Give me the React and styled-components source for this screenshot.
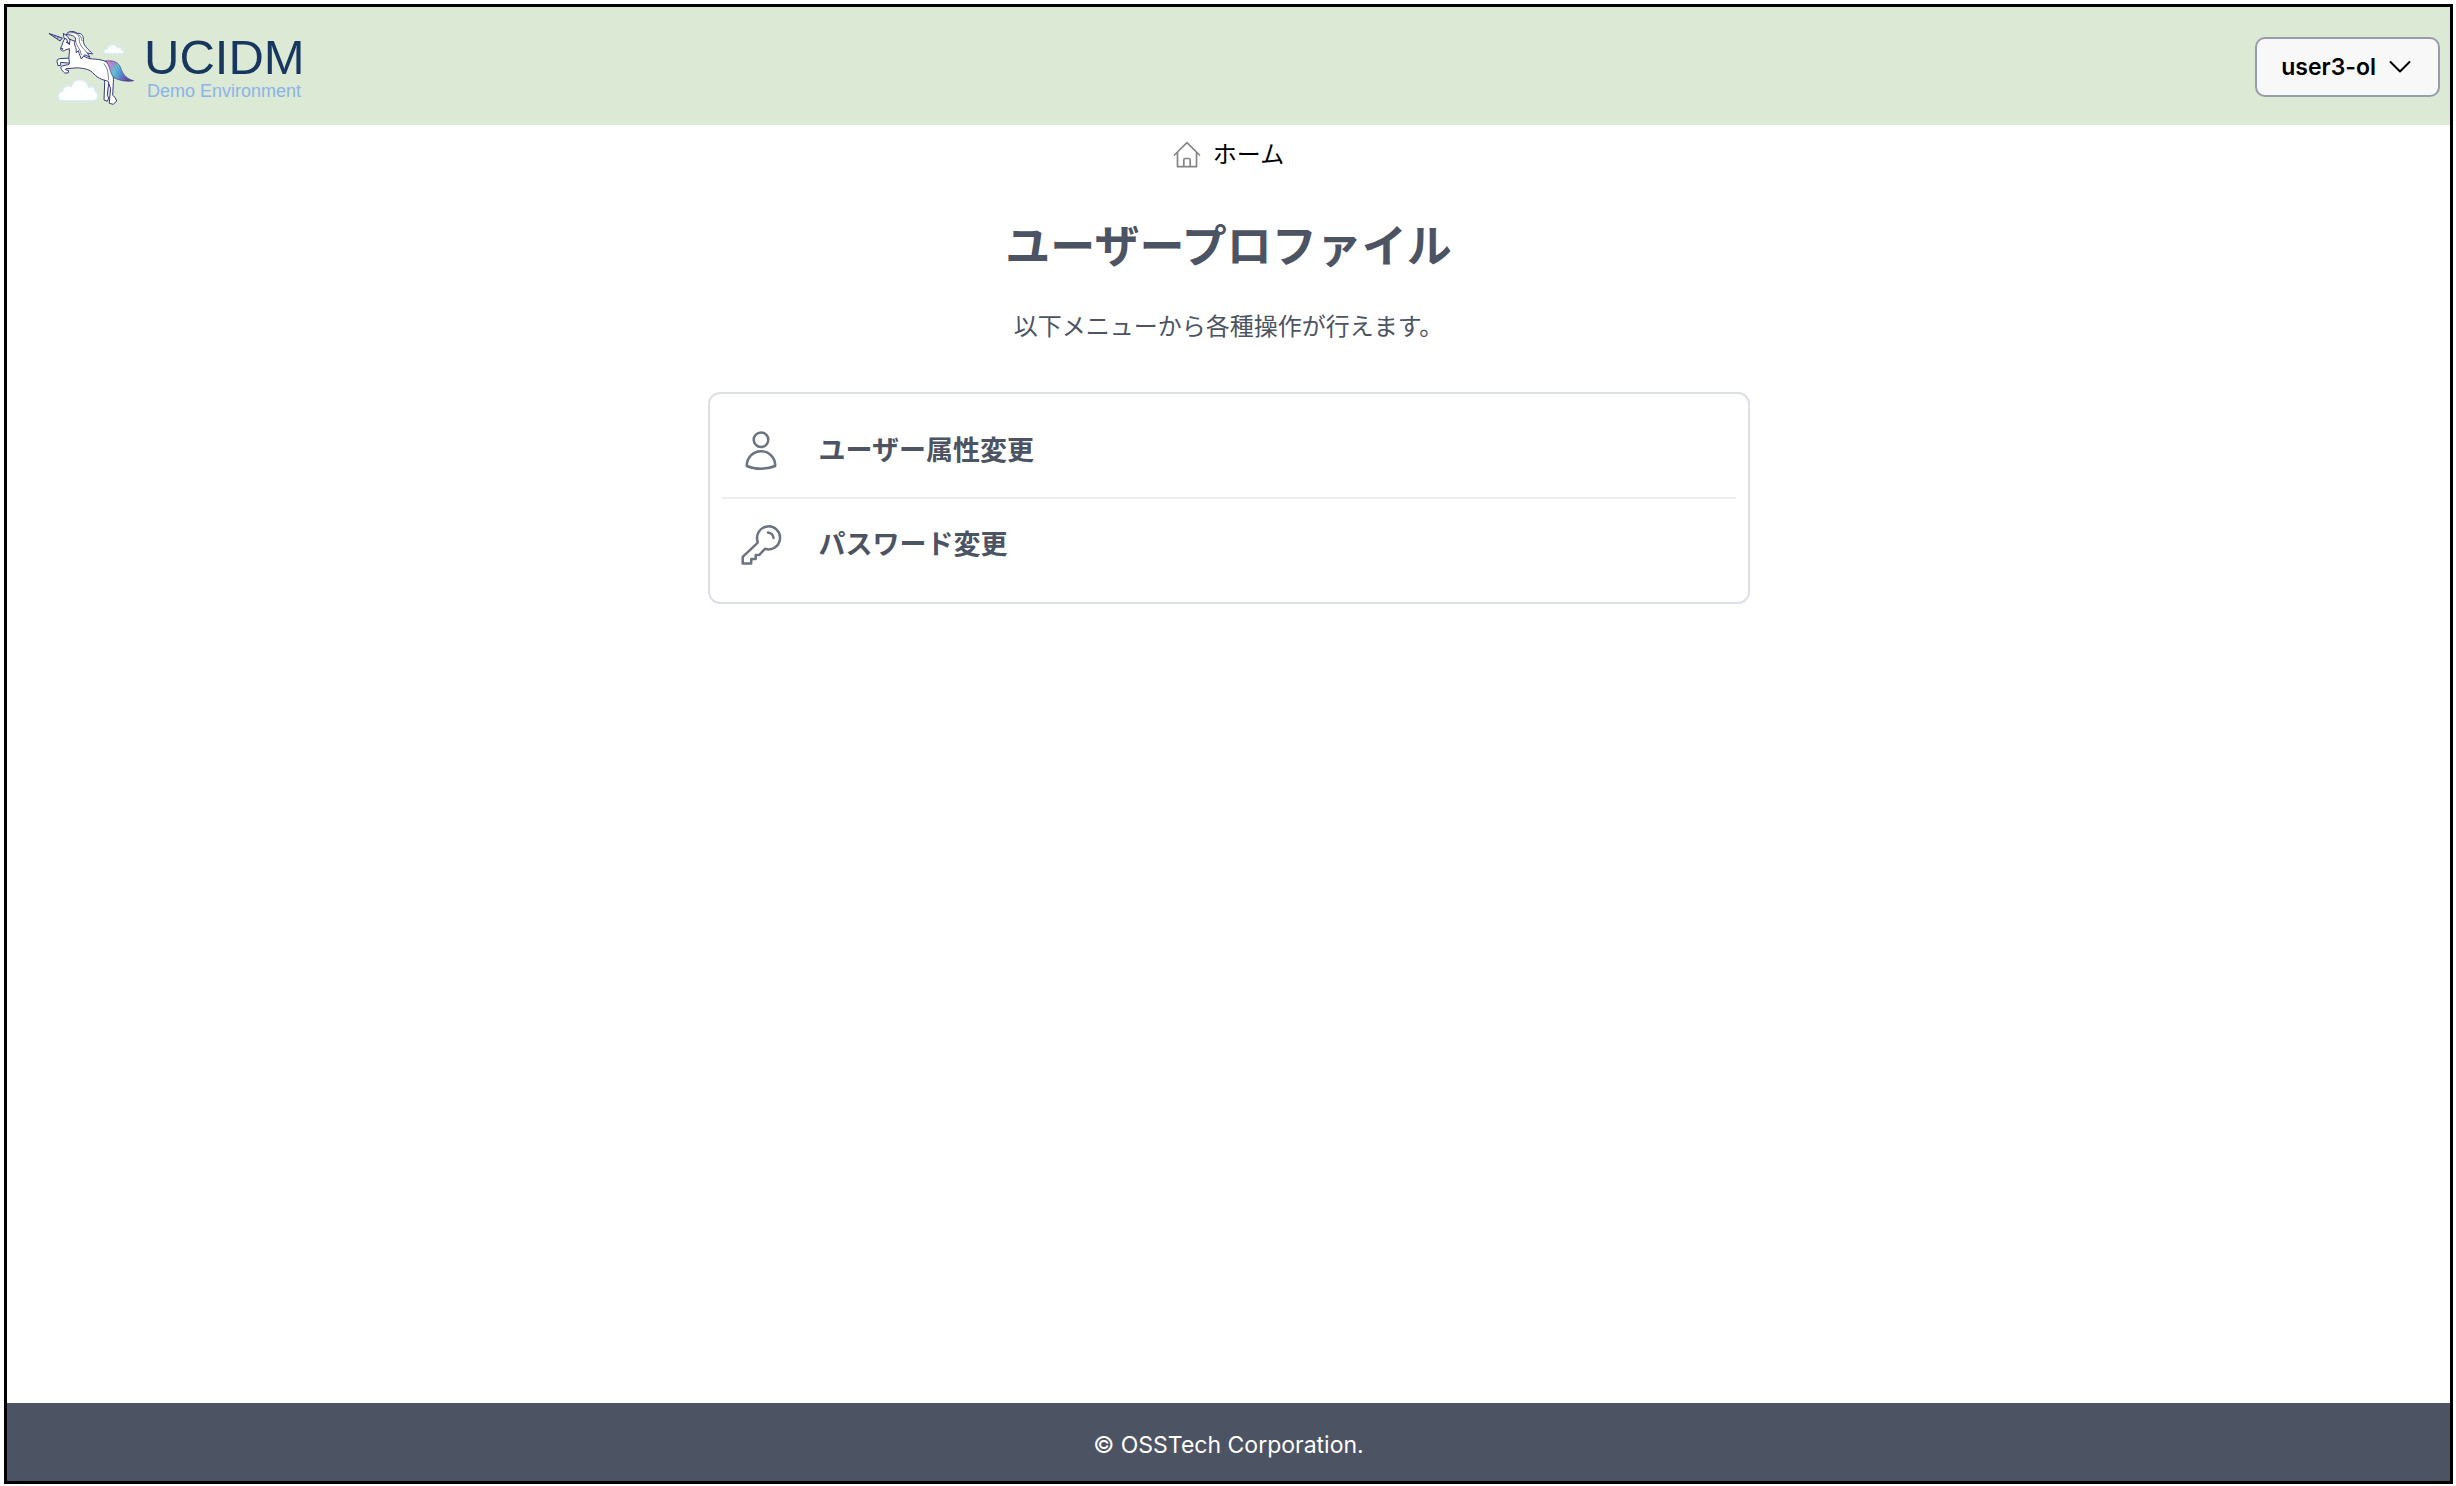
import React from 'react';
import styled, { createGlobalStyle } from 'styled-components';

const GlobalStyle = createGlobalStyle`
    * {
        box-sizing: border-box;
    }
    body {
        margin: 0;
        background: #fff;
        color: #000;
        font-family: Inter, "Noto Sans CJK JP", sans-serif;
        font-size: 24px;
        line-height: 36px;
    }
    a {
        color: inherit;
        text-decoration: none;
    }
`

const Page = styled.div`
    display: flex;
    min-height: 100vh;
    padding: 4px 3px 2px 4px;
`

const Frame = styled.div`
    flex: 1;
    display: flex;
    flex-direction: column;
    border: 3px solid #000;
`

const Header = styled.header`
    display: flex;
    align-items: center;
    justify-content: space-between;
    height: 118px;
    padding: 2px 10px 0 33px;
    background: #dce9d5;
`

const Brand = styled.a`
    display: flex;
    align-items: center;
`

const BrandText = styled.span`
    display: flex;
    flex-direction: column;
    margin-left: -6px;
    font-family: "Liberation Sans", Arial, sans-serif;
`

const BrandName = styled.span`
    color: #17375e;
    font-size: 49px;
    line-height: 48px;
`

const BrandNote = styled.span`
    padding-left: 3px;
    color: #8db3e6;
    font-size: 18px;
    line-height: 20px;
`

const UserButton = styled.button`
    display: flex;
    align-items: center;
    gap: 12px;
    height: 60px;
    padding: 0 26px 0 24px;
    border: 2px solid #969caa;
    border-radius: 10px;
    background: #f8f8f8;
    color: #000;
    font-family: inherit;
    font-size: 23px;
    font-weight: 600;
`

const Main = styled.main`
    flex: 1;
    display: flex;
    flex-direction: column;
    align-items: center;
    padding: 12px 16px;
`

const HomeLink = styled.a`
    display: flex;
    align-items: center;
    gap: 12px;
`

const Title = styled.h1`
    margin: 42px 0 30px;
    color: #4c5362;
    font-size: 45px;
    font-weight: 700;
    line-height: 64px;
`

const Lead = styled.p`
    margin: 0;
    color: #4c5362;
`

const Menu = styled.ul`
    width: 100%;
    max-width: 1042px;
    margin: 47px 0 0;
    padding: 11px 12px;
    border: 2px solid #dcdfe6;
    border-radius: 12px;
    list-style: none;
`

const MenuItem = styled.li`
    & + & {
        border-top: 2px solid #eeeeef;
    }
`

const MenuLink = styled.a`
    display: flex;
    align-items: center;
    gap: 36px;
    height: 92px;
    padding: 0 17px;
    color: #4c5362;
    font-size: 27px;
    font-weight: 700;

    svg {
        color: #6b7280;
    }
`

const Footer = styled.footer`
    padding: 24px 16px 18px;
    background: #4c5362;
    color: #fff;
    font-size: 23px;
    text-align: center;
`

const Unicorn = () => (
    <svg width="110" height="95" viewBox="0 0 330 285" aria-hidden="true">
        <defs>
            <linearGradient id="tail" x1="0" y1="0" x2="1" y2="0.5">
                <stop offset="0" stopColor="#e07ab8" />
                <stop offset="0.25" stopColor="#b48ad2" />
                <stop offset="0.45" stopColor="#5cc4d2" />
                <stop offset="0.68" stopColor="#5f92d6" />
                <stop offset="1" stopColor="#6b3fa0" />
            </linearGradient>
        </defs>
        <g fill="#fff" stroke="#d5ebfa" strokeWidth="4" strokeLinejoin="round">
            <path d="M66 242C50 240 50 216 68 214C68 200 84 194 94 200C98 174 138 170 146 202C160 198 168 206 164 214C178 220 176 240 160 242Z" />
            <path d="M198 101C188 99 190 86 202 87C204 72 228 68 232 84C240 80 246 84 244 90C254 90 254 101 246 101Z" />
        </g>
        <g fill="#fff" stroke="#343c7c" strokeWidth="3" strokeLinejoin="round" strokeLinecap="round">
            <path d="M190 160L194 188L192 240L202 244L206 234L202 226L206 188L204 160Z" />
            <path d="M94 114L58 116Q50 118 51 124L54 137L62 136L62 127L94 130Z" />
            <path d="M76 54C68 62 68 74 62 84C60 92 70 96 76 90L88 86C90 100 84 108 88 126C90 132 86 136 78 135L64 139C60 144 66 152 74 159L84 159L86 152L76 149L78 146C96 146 108 142 118 144C136 146 150 148 162 162C176 178 194 180 204 184L212 206L209 234L208 250L220 253L230 243L225 232L218 226L220 188C222 164 216 138 200 126C180 114 150 120 138 112C122 104 112 90 108 66Z" />
            <path d="M28 41L67 54L61 62Z" fill="#b8c4e2" />
            <path d="M37 44L36 46M46 47L44 51M55 50L52 56" strokeWidth="2" />
            <path d="M198 123C218 120 236 126 242 144C250 168 264 178 281 182C258 187 236 180 224 174C210 166 212 140 198 123Z" fill="url(#tail)" strokeWidth="2" />
            <path d="M212 126C228 134 226 160 250 177M224 127C238 146 240 166 262 180" fill="none" strokeWidth="1" strokeOpacity="0.6" />
            <path d="M72 54L70 40L82 49L90 60L88 74Q82 68 80 58Z" />
            <path d="M79 44C82 30 104 33 112 40C126 38 132 50 130 64C132 80 146 88 158 102L142 99L150 112L134 104L124 117C122 108 116 104 116 92L108 98C112 80 98 76 106 62C110 50 98 44 79 44Z" />
            <path d="M84 40C100 34 118 40 118 58C116 76 134 88 142 99M106 62C108 78 122 86 124 104M96 36C110 36 124 44 126 62" fill="none" strokeWidth="2" />
            <path d="M80 67L84 69M65 86L68 87" strokeWidth="4" />
            <path d="M192 132C206 146 204 166 206 180" fill="none" strokeWidth="2" />
        </g>
    </svg>
)

const HomeIcon = () => (
    <svg width="28" height="28" viewBox="0 0 28 28" fill="none" stroke="#858585" strokeWidth="1.7" strokeLinejoin="round" strokeLinecap="round" aria-hidden="true">
        <path d="M1.5 14L14 1.7L26.5 14M4.5 11.5V25.7H23.5V11.5M10.8 25.5V19Q10.8 17.5 12.3 17.5H15.7Q17.2 17.5 17.2 19V25.5" />
    </svg>
)

const PersonIcon = () => (
    <svg width="44" height="44" viewBox="0 0 44 44" fill="none" stroke="currentColor" strokeWidth="2.5" strokeLinejoin="round" aria-hidden="true">
        <circle cx="22" cy="10.8" r="7.3" />
        <path d="M7.8 37C7.8 28.5 14 22.3 22 22.3S36.2 28.5 36.2 37C28 40.6 16 40.6 7.8 37Z" />
    </svg>
)

const KeyIcon = () => (
    <svg width="44" height="44" viewBox="0 0 44 44" fill="none" stroke="currentColor" strokeWidth="2.5" strokeLinejoin="round" strokeLinecap="round" aria-hidden="true">
        <path d="M18.6 18.4A11.5 11.5 0 1 1 26 25.8L20.3 31.9H16.7V36H12.2V40.5H3.7V33.8L17.8 20.6Q18.9 19.6 18.6 18.4Z" />
        <path d="M29 9.5A6 6 0 0 1 34.5 15" />
    </svg>
)

const ChevronIcon = () => (
    <svg width="24" height="24" viewBox="0 0 24 24" fill="none" stroke="#000" strokeWidth="2" strokeLinecap="round" strokeLinejoin="round" aria-hidden="true">
        <path d="M2.5 7L12 16.5L21.5 7" />
    </svg>
)

const items = [
    { label: 'ユーザー属性変更', icon: PersonIcon },
    { label: 'パスワード変更', icon: KeyIcon },
]

export default function App () {

    return(
        <Page>
        <GlobalStyle />
        <Frame>
            <Header>
                <Brand href="#">
                    <Unicorn />
                    <BrandText>
                        <BrandName>UCIDM</BrandName>
                        <BrandNote>Demo Environment</BrandNote>
                    </BrandText>
                </Brand>
                <UserButton type="button">user3-ol <ChevronIcon /></UserButton>
            </Header>

            <Main>
                <HomeLink href="#"><HomeIcon />ホーム</HomeLink>
                <Title>ユーザープロファイル</Title>
                <Lead>以下メニューから各種操作が行えます。</Lead>
                <Menu>
                    {items.map(({ label, icon: Icon }) => (
                        <MenuItem key={label}>
                            <MenuLink href="#"><Icon />{label}</MenuLink>
                        </MenuItem>
                    ))}
                </Menu>
            </Main>

            <Footer>© OSSTech Corporation.</Footer>
        </Frame>
        </Page>
    )
}
